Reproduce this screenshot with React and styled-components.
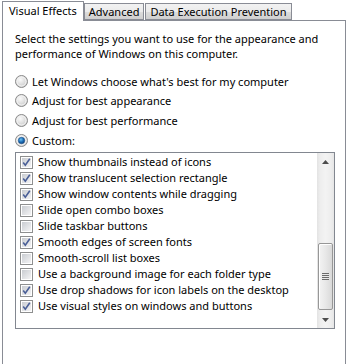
import React from 'react';
import styled, { createGlobalStyle } from 'styled-components';

const COLORS = {
  tabBorder: '#898c95',
  listBorder: '#828790',
  text: '#000000',
  check: '#4a5f97'
};

const GlobalStyle = createGlobalStyle`
  html, body {
    margin: 0;
    padding: 0;
    background: #ffffff;
    overflow: hidden;
  }
  body {
    font-family: "Noto Sans", "Open Sans", sans-serif;
    font-size: 11px;
    line-height: 15px;
    color: ${COLORS.text};
  }
`;

const Dialog = styled.div`
  width: 349px;
  height: 364px;
  padding: 1px 0 0 2px;
  box-sizing: border-box;
`;

const TabStrip = styled.div`
  display: flex;
  align-items: flex-end;
  height: 19px;
  position: relative;
  z-index: 1;
`;

const Tab = styled.div`
  box-sizing: border-box;
  height: ${p => (p.$active ? '20px' : '17px')};
  padding: ${p => (p.$active ? '1px 6px 0 6px' : '0 4px')};
  margin-right: ${p => (p.$active ? '0' : '1px')};
  margin-bottom: ${p => (p.$active ? '-1px' : '0')};
  border: 1px solid ${COLORS.tabBorder};
  border-bottom: ${p => (p.$active ? 'none' : `1px solid ${COLORS.tabBorder}`)};
  background: ${p =>
    p.$active ? '#ffffff' : 'linear-gradient(to bottom, #f2f2f2 0%, #ebebeb 50%, #dddddd 51%, #cfcfcf 100%)'};
  display: flex;
  align-items: ${p => (p.$active ? 'flex-start' : 'center')};
  line-height: 16px;
  white-space: nowrap;
`;

const Panel = styled.div`
  width: 344px;
  height: 360px;
  box-sizing: border-box;
  border: 1px solid ${COLORS.tabBorder};
  padding: 10px 0 0 12px;
  background: #ffffff;
`;

const Intro = styled.p`
  margin: 0;
  width: 320px;
  line-height: 15px;
`;

const RadioGroup = styled.div`
  margin-top: 10px;
  display: flex;
  flex-direction: column;
`;

const RadioRow = styled.label`
  display: flex;
  align-items: center;
  gap: 4px;
  height: ${p => p.$h}px;
  white-space: nowrap;
`;

const ListBox = styled.div`
  margin-top: 2px;
  width: 320px;
  height: 177px;
  box-sizing: border-box;
  border: 1px solid ${COLORS.listBorder};
  display: flex;
`;

const Items = styled.div`
  flex: 1;
  padding-top: 1px;
  overflow: hidden;
`;

const Item = styled.div`
  display: flex;
  align-items: center;
  gap: 5px;
  height: 16px;
  line-height: 16px;
  padding-left: 4px;
  white-space: nowrap;

  svg {
    display: block;
    flex: none;
  }
`;

const ScrollBar = styled.div`
  width: 17px;
  display: flex;
  flex-direction: column;
  background: linear-gradient(to right, #e3e3e3 0%, #eeeeee 20%, #f3f3f3 50%, #eeeeee 80%, #e6e6e6 100%);
`;

const ArrowButton = styled.div`
  height: 17px;
  display: flex;
  align-items: center;
  justify-content: center;
`;

const Track = styled.div`
  flex: 1;
  display: flex;
  flex-direction: column;
  justify-content: flex-end;
  padding: 0 1px 1px 1px;
`;

const Thumb = styled.div`
  height: 67px;
  box-sizing: border-box;
  border: 1px solid #979797;
  border-radius: 2px;
  background: linear-gradient(to right, #f3f3f3 0%, #e8e8e8 50%, #d9d9d9 100%);
  box-shadow: inset 1px 1px 0 #ffffff;
  display: flex;
  align-items: center;
  justify-content: center;
`;

const Grip = styled.div`
  width: 7px;
  height: 7px;
  background: repeating-linear-gradient(to bottom, #6b6b6b 0, #6b6b6b 1px, #e8e8e8 1px, #e8e8e8 2px);
`;

function Radio({ checked }) {
  return (
    <svg width="13" height="13" viewBox="0 0 13 13" style={{ display: 'block', flex: 'none' }}>
      <defs>
        <radialGradient id="rfill" cx="40%" cy="35%" r="70%">
          <stop offset="0%" stopColor="#fafafa" />
          <stop offset="100%" stopColor="#c7c7c7" />
        </radialGradient>
        <radialGradient id="rdot" cx="40%" cy="35%" r="70%">
          <stop offset="0%" stopColor="#6fc2f3" />
          <stop offset="55%" stopColor="#1c6fb8" />
          <stop offset="100%" stopColor="#0d3f7a" />
        </radialGradient>
      </defs>
      <circle cx="6.5" cy="6.5" r="6" fill="url(#rfill)" stroke="#8a8a8a" strokeWidth="1" />
      <circle cx="6.5" cy="6.5" r="4.5" fill="none" stroke="#f4f4f4" strokeWidth="1" />
      {checked && <circle cx="6.5" cy="6.5" r="3.2" fill="url(#rdot)" stroke="#1a4f8a" strokeWidth="0.6" />}
    </svg>
  );
}

function Check({ checked }) {
  return (
    <svg width="13" height="13" viewBox="0 0 13 13">
      <defs>
        <linearGradient id="cfill" x1="0" y1="0" x2="1" y2="1">
          <stop offset="0%" stopColor="#c9ccd1" />
          <stop offset="100%" stopColor="#f4f4f5" />
        </linearGradient>
      </defs>
      <rect x="0.5" y="0.5" width="12" height="12" fill="#ffffff" stroke="#8e8f8f" />
      <rect x="2" y="2" width="9" height="9" fill="url(#cfill)" />
      {checked && (
        <path d="M3.2 6.6 L5.3 9.2 L9.8 2.8" fill="none" stroke={COLORS.check} strokeWidth="1.6" />
      )}
    </svg>
  );
}

function Arrow({ up }) {
  return (
    <svg width="7" height="4" viewBox="0 0 7 4" style={{ display: 'block' }}>
      {up ? <path d="M3.5 0 L7 4 L0 4 Z" fill="#4d4d4d" /> : <path d="M0 0 L7 0 L3.5 4 Z" fill="#4d4d4d" />}
    </svg>
  );
}

const options = [
  { label: "Let Windows choose what's best for my computer", h: 20 },
  { label: 'Adjust for best appearance', h: 19 },
  { label: 'Adjust for best performance', h: 20 },
  { label: 'Custom:', h: 20, checked: true }
];

const effects = [
  { label: 'Show thumbnails instead of icons', on: true },
  { label: 'Show translucent selection rectangle', on: true },
  { label: 'Show window contents while dragging', on: true },
  { label: 'Slide open combo boxes', on: false },
  { label: 'Slide taskbar buttons', on: false },
  { label: 'Smooth edges of screen fonts', on: true },
  { label: 'Smooth-scroll list boxes', on: false },
  { label: 'Use a background image for each folder type', on: false },
  { label: 'Use drop shadows for icon labels on the desktop', on: true },
  { label: 'Use visual styles on windows and buttons', on: true }
];

export default function App() {
  return (
    <Dialog>
      <GlobalStyle />
      <TabStrip>
        <Tab $active>Visual Effects</Tab>
        <Tab>Advanced</Tab>
        <Tab>Data Execution Prevention</Tab>
      </TabStrip>
      <Panel>
        <Intro>
          Select the settings you want to use for the appearance and performance of Windows on this computer.
        </Intro>
        <RadioGroup>
          {options.map(o => (
            <RadioRow key={o.label} $h={o.h}>
              <Radio checked={o.checked} />
              {o.label}
            </RadioRow>
          ))}
        </RadioGroup>
        <ListBox>
          <Items>
            {effects.map(e => (
              <Item key={e.label}>
                <Check checked={e.on} />
                {e.label}
              </Item>
            ))}
          </Items>
          <ScrollBar>
            <ArrowButton>
              <Arrow up />
            </ArrowButton>
            <Track>
              <Thumb>
                <Grip />
              </Thumb>
            </Track>
            <ArrowButton>
              <Arrow />
            </ArrowButton>
          </ScrollBar>
        </ListBox>
      </Panel>
    </Dialog>
  );
}
